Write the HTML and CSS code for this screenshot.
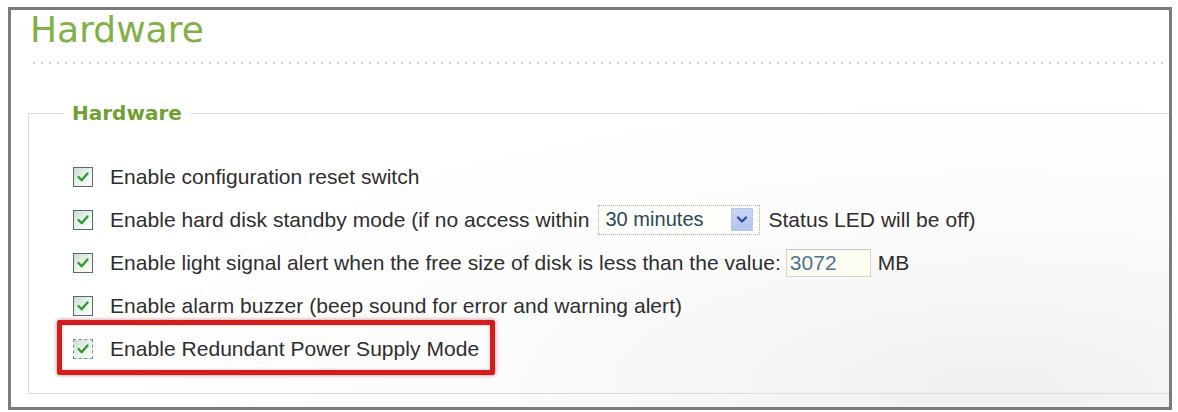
FILE: index.html
```html
<!DOCTYPE html>
<html>
<head>
<meta charset="utf-8">
<link rel="stylesheet" href="styles.css">
</head>
<body>
<div class="frame">
  <h1 class="title">Hardware</h1>
  <div class="dots"></div>
  <fieldset class="group">
    <legend class="legend">Hardware</legend>
    <div class="row">
      <span class="cb"><svg viewBox="0 0 20 20"><path d="M5 10 L8.5 13.5 L15 6" /></svg></span>
      <span class="label">Enable configuration reset switch</span>
    </div>
    <div class="row">
      <span class="cb"><svg viewBox="0 0 20 20"><path d="M5 10 L8.5 13.5 L15 6" /></svg></span>
      <span class="label">Enable hard disk standby mode (if no access within</span>
      <span class="select"><span class="select-text">30 minutes</span><span class="select-btn"><svg viewBox="0 0 20 20"><path d="M6 8 L10 12 L14 8" /></svg></span></span>
      <span class="label">Status LED will be off)</span>
    </div>
    <div class="row">
      <span class="cb"><svg viewBox="0 0 20 20"><path d="M5 10 L8.5 13.5 L15 6" /></svg></span>
      <span class="label">Enable light signal alert when the free size of disk is less than the value:</span>
      <span class="input">3072</span>
      <span class="label">MB</span>
    </div>
    <div class="row">
      <span class="cb"><svg viewBox="0 0 20 20"><path d="M5 10 L8.5 13.5 L15 6" /></svg></span>
      <span class="label">Enable alarm buzzer (beep sound for error and warning alert)</span>
    </div>
    <div class="row highlight-row">
      <span class="cb cb-focus"><svg viewBox="0 0 20 20"><path d="M5 10 L8.5 13.5 L15 6" /></svg></span>
      <span class="label">Enable Redundant Power Supply Mode</span>
      <span class="redbox"></span>
    </div>
  </fieldset>
</div>
</body>
</html>
```
FILE: styles.css
```css
html, body {
  margin: 0;
  padding: 0;
  background: #ffffff;
}
body {
  width: 1178px;
  height: 412px;
  overflow: hidden;
  font-family: "Liberation Sans", Arial, sans-serif;
}
.frame {
  box-sizing: border-box;
  margin: 7px 6px 0 8px;
  height: 403px;
  border: 3px solid #7b7b7b;
  overflow: hidden;
  background: radial-gradient(ellipse 900px 300px at 85% 95%, #f0f0f0 0%, #fbfbfb 55%, #ffffff 100%);
}
.title {
  margin: 0;
  padding: 2px 0 0 19px;
  font-family: "DejaVu Sans", Verdana, sans-serif;
  font-weight: normal;
  font-size: 36px;
  line-height: 36px;
  color: #80b046;
}
.dots {
  margin: 14px 0 0 22px;
  height: 2px;
  background-image: repeating-linear-gradient(90deg, #cccccc 0 2px, transparent 2px 8px);
}
.group {
  margin: 37px -20px 0 17px;
  padding: 30px 0 23px 34px;
  border: 1px solid #dadada;
  min-width: 0;
}
.legend {
  padding: 0 9px;
  font-family: "DejaVu Sans", Verdana, sans-serif;
  font-weight: bold;
  font-size: 20px;
  color: #70a032;
}
.row {
  display: flex;
  align-items: center;
  height: 43px;
  margin-left: 10px;
  font-size: 21px;
  letter-spacing: 0.04px;
  color: #2e2e2e;
  white-space: nowrap;
}
.highlight-row {
  position: relative;
}
.cb {
  box-sizing: border-box;
  width: 20px;
  height: 20px;
  margin-right: 17px;
  border: 1px solid #56687a;
  background: linear-gradient(135deg, #cfdccf 0%, #eef6ee 60%, #fbfdfb 100%);
  display: flex;
  flex: none;
}
.cb svg {
  width: 18px;
  height: 18px;
}
.cb path {
  fill: none;
  stroke: #2f9a2f;
  stroke-width: 2.6;
  stroke-linecap: round;
  stroke-linejoin: round;
}
.cb-focus {
  border: 1px dashed #7a8a9a;
}
.label {
  display: block;
}
.select {
  box-sizing: border-box;
  display: flex;
  align-items: center;
  justify-content: space-between;
  width: 162px;
  height: 30px;
  margin: 0 8px 0 9px;
  padding: 0 6px 0 6px;
  border: 1px dotted #a9b0a0;
  background: #fefefb;
  font-size: 20px;
  color: #2c4858;
}
.select-btn {
  box-sizing: border-box;
  width: 22px;
  height: 23px;
  display: flex;
  background: linear-gradient(180deg, #c8d6f4, #b2c4ec);
  border: 1px solid #b7c6e6;
}
.select-btn svg {
  width: 20px;
  height: 21px;
}
.select-btn path {
  fill: none;
  stroke: #2d4fa0;
  stroke-width: 2.4;
  stroke-linecap: round;
  stroke-linejoin: round;
}
.input {
  box-sizing: border-box;
  width: 85px;
  height: 28px;
  margin: 0 7px 0 5px;
  padding: 0 0 0 3px;
  border: 1px solid #d4d4c8;
  border-top-color: #b9cbd6;
  background: #fcfcf1;
  line-height: 26px;
  font-size: 21px;
  color: #4d7394;
}
.redbox {
  position: absolute;
  left: -16px;
  top: -7px;
  width: 438px;
  height: 55px;
  box-sizing: border-box;
  border: 5px solid #d21d1d;
  border-radius: 2px;
  box-shadow: 0 0 4px rgba(90, 0, 0, 0.45), inset 0 0 3px rgba(120, 0, 0, 0.3);
  pointer-events: none;
}
```
